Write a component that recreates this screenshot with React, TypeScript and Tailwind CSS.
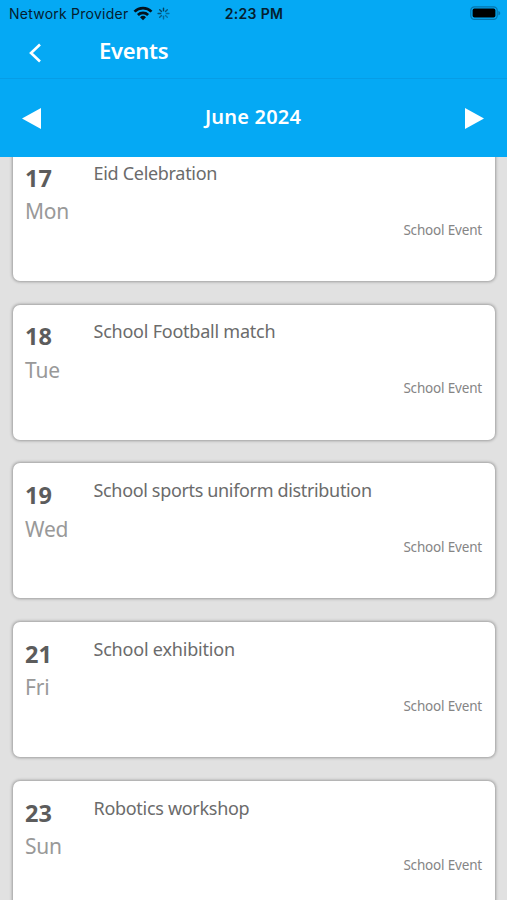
type SchoolEvent = {
  day: string;
  weekday: string;
  title: string;
  titleTracking: string;
};

const events: SchoolEvent[] = [
  { day: "17", weekday: "Mon", title: "Eid Celebration", titleTracking: "tracking-[-0.3px]" },
  { day: "18", weekday: "Tue", title: "School Football match", titleTracking: "tracking-[-0.23px]" },
  { day: "19", weekday: "Wed", title: "School sports uniform distribution", titleTracking: "tracking-[-0.34px]" },
  { day: "21", weekday: "Fri", title: "School exhibition", titleTracking: "tracking-[-0.2px]" },
  { day: "23", weekday: "Sun", title: "Robotics workshop", titleTracking: "tracking-[-0.3px]" },
];

function WifiIcon() {
  return (
    <svg width="20" height="15" viewBox="0 0 20 15" className="shrink-0">
      <g fill="none" stroke="#04121c" strokeWidth="2.7">
        <path d="M1.5 5.6a12.2 12.2 0 0 1 17 0" />
        <path d="M4.9 9a7.3 7.3 0 0 1 10.2 0" />
      </g>
      <path d="M10 14.3 7 11.3a4.3 4.3 0 0 1 6 0z" fill="#04121c" />
    </svg>
  );
}

const spokes = [
  { angle: 0, opacity: 0.75 },
  { angle: 45, opacity: 0.6 },
  { angle: 90, opacity: 0.45 },
  { angle: 135, opacity: 0.4 },
  { angle: 180, opacity: 0.45 },
  { angle: 225, opacity: 0.55 },
  { angle: 270, opacity: 0.65 },
  { angle: 315, opacity: 0.7 },
];

function Spinner() {
  return (
    <svg width="13" height="13" viewBox="-6.5 -6.5 13 13" className="shrink-0">
      {spokes.map((s) => (
        <line
          key={s.angle}
          x1="0"
          y1="-2.8"
          x2="0"
          y2="-5.4"
          stroke="#04202f"
          strokeWidth="1.4"
          strokeLinecap="round"
          opacity={s.opacity}
          transform={`rotate(${s.angle})`}
        />
      ))}
    </svg>
  );
}

function BatteryIcon() {
  return (
    <svg width="31" height="15" viewBox="0 0 31 15">
      <rect x="0.8" y="0.8" width="26.4" height="12.6" rx="3.6" fill="none" stroke="#0575ad" strokeWidth="1.2" />
      <rect x="2.6" y="2.6" width="22.8" height="9" rx="1.8" fill="#000" />
      <path d="M28.4 4.9c2.4.7 2.4 3.7 0 4.4z" fill="#0575ad" />
    </svg>
  );
}

function StatusBar() {
  return (
    <div className="grid h-[27px] grid-cols-[1fr_auto_1fr] items-center pl-[9px] pr-[6px] font-['Inter',sans-serif] text-[14px] leading-none text-[#04202f]">
      <div className="flex items-center">
        <span className="whitespace-nowrap tracking-[0.24px]">Network Provider</span>
        <span className="ml-[5px]"><WifiIcon /></span>
        <span className="ml-[4px]"><Spinner /></span>
      </div>
      <span className="mr-[2px] whitespace-nowrap font-semibold tracking-[0.3px]">2:23 PM</span>
      <div className="flex justify-end"><BatteryIcon /></div>
    </div>
  );
}

function EventCard({ event }: { event: SchoolEvent }) {
  return (
    <article className="flex h-[135px] shrink-0 rounded-[7px] bg-white pl-[12px] pr-[13px] shadow-[0_0_3px_1px_rgba(0,0,0,0.3)]">
      <div className="w-[68.5px] shrink-0 pt-[15.75px]">
        <div className="text-[23.5px] font-bold leading-[32px] text-[#5c5c5c]">{event.day}</div>
        <div className="mt-[1.5px] text-[21px] leading-[32px] tracking-[-0.2px] text-[#999]">{event.weekday}</div>
      </div>
      <div className="flex flex-1 flex-col pt-[13.75px]">
        <div className={`whitespace-nowrap text-[18px] leading-[26px] text-[#6b6b6b] ${event.titleTracking}`}>{event.title}</div>
        <div className="mt-[34px] self-end whitespace-nowrap text-[13.5px] leading-[20px] tracking-[-0.18px] text-[#858585]">School Event</div>
      </div>
    </article>
  );
}

export default function App() {
  return (
    <div className="flex h-[900px] w-[507px] flex-col overflow-hidden bg-[#e1e1e1] font-['Noto_Sans','Open_Sans',sans-serif]">
      <header className="z-10 shrink-0 bg-[#05a9f4] text-white">
        <StatusBar />
        <div className="flex h-[52px] items-center border-b border-[#069de6] pl-[29px]">
          <svg width="12" height="20" viewBox="0 0 12 20" fill="none" stroke="white" strokeWidth="2.6">
            <path d="M11 1.5 2 10l9 8.500" />
          </svg>
          <h1 className="ml-[58px] pb-[6px] text-[22px] font-semibold leading-none tracking-[-0.3px]">Events</h1>
        </div>
        <div className="flex h-[78px] items-center justify-between pl-[22px] pr-[23px]">
          <svg width="19" height="21" viewBox="0 0 19 21" fill="white"><path d="M0 10.500 19 0v21z" /></svg>
          <span className="pb-[2px] text-[20px] font-semibold leading-none tracking-[0.2px]">June 2024</span>
          <svg width="19" height="21" viewBox="0 0 19 21" fill="white"><path d="M19 10.500 0 0v21z" /></svg>
        </div>
      </header>
      <main className="-mt-[11.25px] flex flex-col gap-[23.75px] pl-[13px] pr-[12px]">
        {events.map((event) => (
          <EventCard key={event.day} event={event} />
        ))}
      </main>
    </div>
  );
}
